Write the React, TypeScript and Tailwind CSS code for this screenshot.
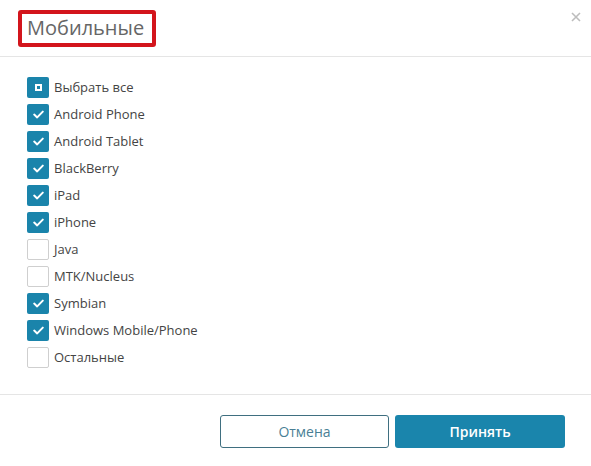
import { useState } from "react";

type Device = { name: string; checked: boolean };

const initial: Device[] = [
  { name: "Android Phone", checked: true },
  { name: "Android Tablet", checked: true },
  { name: "BlackBerry", checked: true },
  { name: "iPad", checked: true },
  { name: "iPhone", checked: true },
  { name: "Java", checked: false },
  { name: "MTK/Nucleus", checked: false },
  { name: "Symbian", checked: true },
  { name: "Windows Mobile/Phone", checked: true },
  { name: "Остальные", checked: false },
];

function Box({ state }: { state: "on" | "off" | "mixed" }) {
  if (state === "off") {
    return <span className="w-[22px] h-[21px] border border-[#cfcfcf] rounded-[2px] bg-white shrink-0" />;
  }
  return (
    <span className="w-[22px] h-[21px] rounded-[2px] bg-[#1a84ab] flex items-center justify-center shrink-0">
      {state === "mixed" ? (
        <span className="w-[7px] h-[7px] border-2 border-white" />
      ) : (
        <svg width="11" height="9" viewBox="0 0 11 9" fill="none">
          <path d="M1.2 4.6 L4.2 7.4 L9.8 1.6" stroke="white" strokeWidth="2" strokeLinecap="round" strokeLinejoin="round" />
        </svg>
      )}
    </span>
  );
}

export default function App() {
  const [items, setItems] = useState(initial);
  const all = items.every((i) => i.checked);
  const none = items.every((i) => !i.checked);

  const toggle = (idx: number) =>
    setItems(items.map((it, i) => (i === idx ? { ...it, checked: !it.checked } : it)));

  return (
    <div className="w-[591px] h-[466px] bg-white flex flex-col" style={{ fontFamily: '"Open Sans", sans-serif' }}>
      {/* Header */}
      <header className="h-[57px] border-b border-[#e5e5e5] flex items-start justify-between shrink-0">
        <div className="ml-[18px] mt-[10px] h-[37px] border-4 border-[#d3151c] rounded-[3px] pl-[5px] pr-[8px] flex items-center">
          <span className="text-[20px] leading-none text-[#666] -mt-[1px]">Мобильные</span>
        </div>
        <button className="mt-[9px] mr-[7px] text-[#bdbdbd] w-[16px] h-[16px] flex items-center justify-center">
          <svg width="10" height="10" viewBox="0 0 10 10">
            <path d="M1 1 L9 9 M9 1 L1 9" stroke="currentColor" strokeWidth="1.6" />
          </svg>
        </button>
      </header>

      {/* Device list */}
      <main className="flex-1 pt-[20px] pl-[27px] flex flex-col gap-[6px]">
        <label
          className="flex items-center gap-[5px] cursor-pointer"
          onClick={() => setItems(items.map((it) => ({ ...it, checked: !all })))}
        >
          <Box state={all ? "on" : none ? "off" : "mixed"} />
          <span className="text-[13px] text-[#444]">Выбрать все</span>
        </label>
        {items.map((it, i) => (
          <label key={it.name} className="flex items-center gap-[5px] cursor-pointer" onClick={() => toggle(i)}>
            <Box state={it.checked ? "on" : "off"} />
            <span className="text-[13px] text-[#444]">{it.name}</span>
          </label>
        ))}
      </main>

      {/* Footer */}
      <footer className="h-[72px] border-t border-[#e5e5e5] flex justify-end items-start pt-[20px] pr-[26px] gap-[6px] shrink-0">
        <button className="w-[169px] h-[33px] rounded-[3px] border border-[#3f6f80] text-[14px] text-[#4a7f95] bg-white">
          Отмена
        </button>
        <button className="w-[170px] h-[33px] rounded-[3px] bg-[#1a85ac] text-[14px] font-semibold text-white">
          Принять
        </button>
      </footer>
    </div>
  );
}
